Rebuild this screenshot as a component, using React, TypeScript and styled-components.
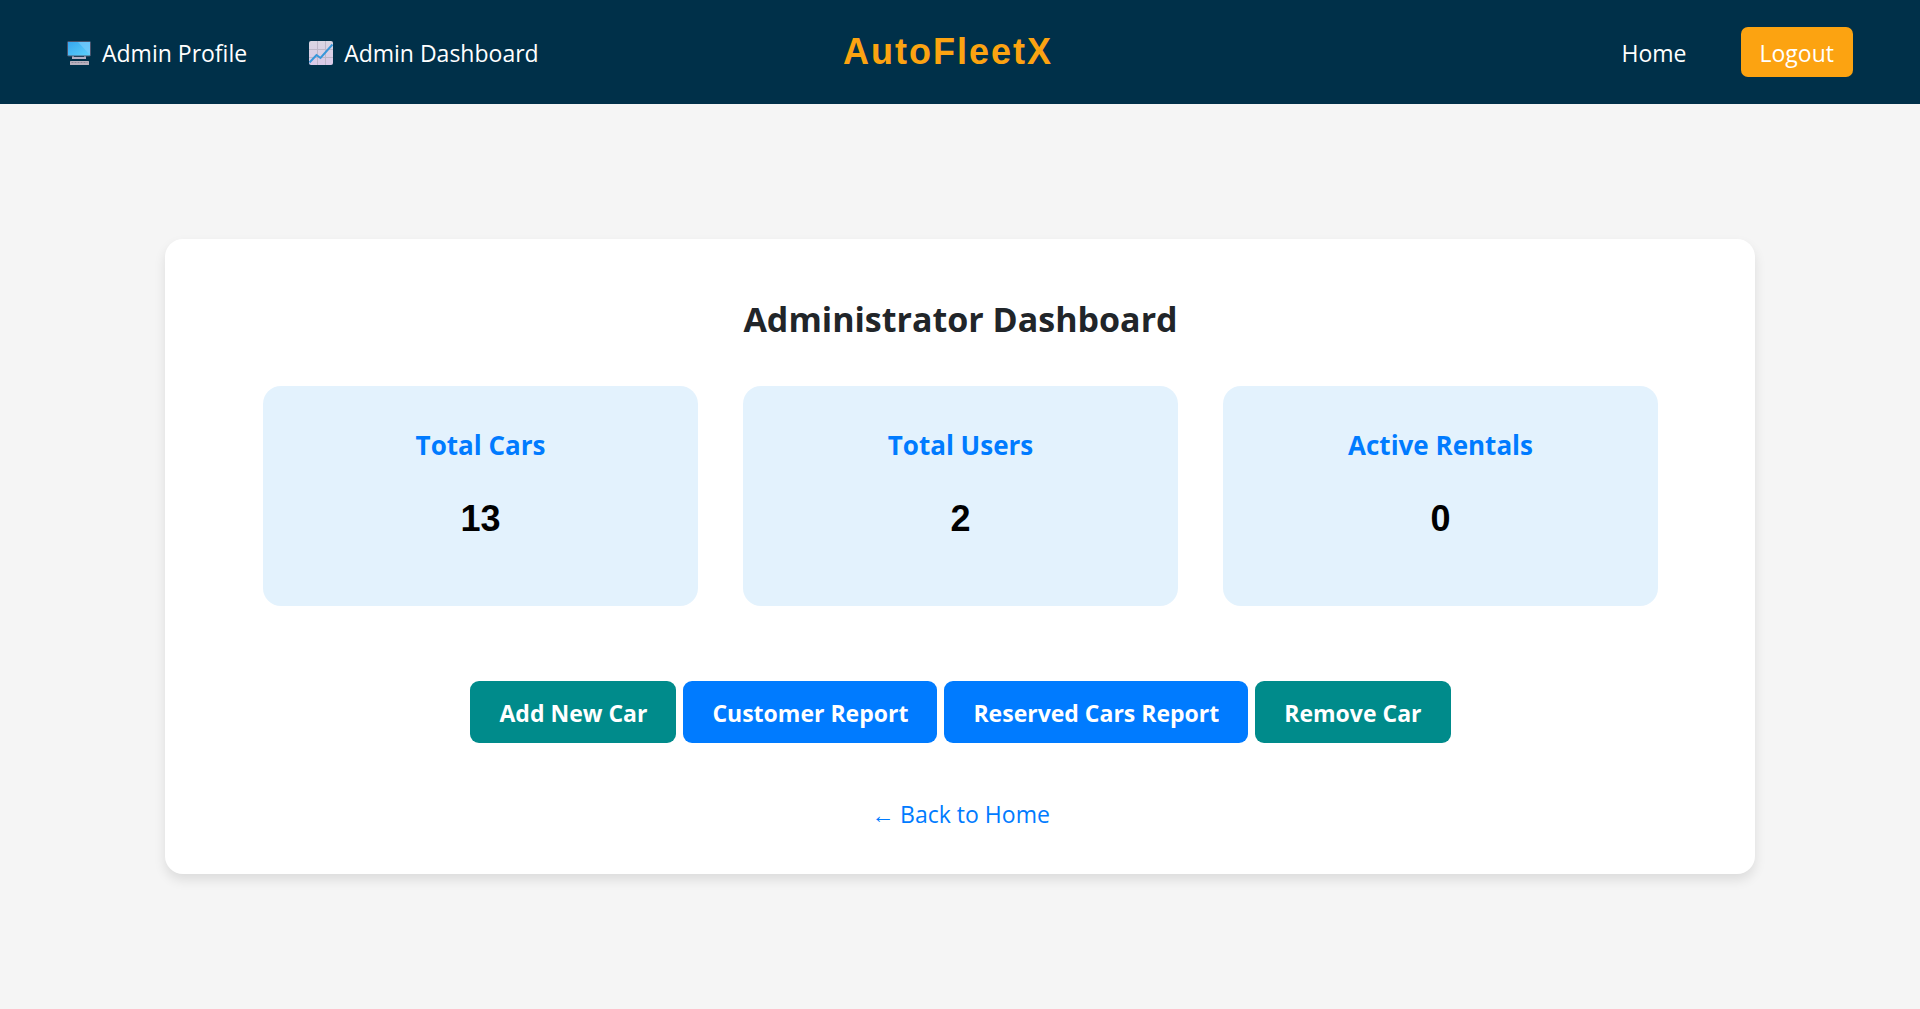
import React from "react";
import styled, { createGlobalStyle } from "styled-components";

const GlobalStyle = createGlobalStyle`
  *, *::before, *::after { box-sizing: border-box; }
  body {
    margin: 0;
    background: #f5f5f5;
    color: #212529;
    font-family: "Segoe UI", "Open Sans", "Noto Sans", sans-serif;
    font-size: 23px;
    line-height: 36px;
  }
  h1, h2, p { margin: 0; }
`;

const Page = styled.div`
  min-height: 100vh;
  display: flex;
  flex-direction: column;
`;

const Header = styled.header`
  display: grid;
  grid-template-columns: 1fr auto 1fr;
  align-items: center;
  min-height: 104px;
  padding: 0 67px;
  background: #003049;
`;

const Nav = styled.nav<{ $end?: boolean }>`
  display: flex;
  align-items: center;
  justify-content: ${(p) => (p.$end ? "flex-end" : "flex-start")};
  gap: ${(p) => (p.$end ? 54 : 62)}px;
`;

const NavLink = styled.a`
  display: inline-flex;
  align-items: center;
  gap: 11px;
  padding-top: 2px;
  color: #fff;
  text-decoration: none;
  white-space: nowrap;
`;

const Icon = styled.svg`
  width: 24px;
  height: 24px;
  flex: none;
`;

const Brand = styled.div`
  padding-right: 24px;
  color: #fca311;
  font-family: Arial, "Liberation Sans", sans-serif;
  font-size: 36px;
  font-weight: 700;
  letter-spacing: 2px;
`;

const Logout = styled.button`
  padding: 8px 19px 6px;
  border: 0;
  border-radius: 7px;
  background: #fca311;
  color: #fff;
  font: inherit;
  cursor: pointer;
`;

const Main = styled.main`
  flex: 1;
  display: flex;
  align-items: center;
  justify-content: center;
  padding: 24px 165px;
`;

const Panel = styled.section`
  display: flex;
  flex-direction: column;
  align-items: center;
  width: 100%;
  padding: 59px 97px 42px 98px;
  border-radius: 18px;
  background: #fff;
  box-shadow: 0 6px 12px rgba(0, 0, 0, 0.1);
`;

const Title = styled.h1`
  font-size: 34px;
  font-weight: 700;
  line-height: 43px;
`;

const Stats = styled.div`
  display: grid;
  grid-template-columns: repeat(3, 1fr);
  gap: 45px;
  width: 100%;
  margin-top: 45px;
`;

const Stat = styled.article`
  min-height: 220px;
  padding: 41px 24px;
  border-radius: 18px;
  background: #e3f2fd;
  text-align: center;
`;

const StatName = styled.h2`
  color: #007bff;
  font-size: 26px;
  font-weight: 700;
`;

const StatValue = styled.p`
  margin-top: 38px;
  color: #000;
  font-family: Arial, "Liberation Sans", sans-serif;
  font-size: 36px;
  font-weight: 700;
`;

const Actions = styled.div`
  display: flex;
  flex-wrap: wrap;
  justify-content: center;
  gap: 7px;
  margin-top: 75px;
`;

const Action = styled.button<{ $report?: boolean }>`
  padding: 14px 29px 12px;
  border: 0;
  border-radius: 9px;
  background: ${(p) => (p.$report ? "#007bff" : "#008b8b")};
  color: #fff;
  font: inherit;
  font-weight: 700;
  cursor: pointer;
`;

const BackLink = styled.a`
  margin-top: 53px;
  color: #007bff;
  text-decoration: none;
`;

const ComputerIcon = () => (
  <Icon viewBox="0 0 24 24" aria-hidden="true">
    <defs>
      <linearGradient id="screen" x1="0" y1="0" x2="1" y2="1">
        <stop offset="0" stopColor="#35a5ef" />
        <stop offset="1" stopColor="#5ed2fb" />
      </linearGradient>
    </defs>
    <path d="M5 14v4h14v-4h-2v2H7v-2z" fill="#b5b0c4" />
    <rect x="0.5" y="0.5" width="23" height="14.5" rx="1" fill="url(#screen)" stroke="#4b526b" />
    <path d="M1 1h10l12 13V1z" fill="#7bc9fa" opacity="0.65" />
    <rect x="3" y="20" width="19" height="4" rx="0.5" fill="#b9b1bd" />
    <path d="M4.500 21.500h16" stroke="#8f899b" strokeWidth="1" strokeDasharray="2 1" />
  </Icon>
);

const ChartIcon = () => (
  <Icon viewBox="0 0 24 24" aria-hidden="true">
    <defs>
      <linearGradient id="paper" x1="0" y1="0" x2="0" y2="1">
        <stop offset="0" stopColor="#d9d5e2" />
        <stop offset="1" stopColor="#dac9e8" />
      </linearGradient>
    </defs>
    <rect width="24" height="24" rx="2" fill="url(#paper)" />
    <path d="M8.500 0v24M16.500 0v24M0 8.500h24M0 16.500h24" stroke="#bdb7c8" />
    <path d="M0.500 21.500 7.500 14l4 3L23.500 3.500" fill="none" stroke="#3797da" strokeWidth="2" />
  </Icon>
);

const stats = [
  { name: "Total Cars", value: 13 },
  { name: "Total Users", value: 2 },
  { name: "Active Rentals", value: 0 },
];

const actions = [
  { label: "Add New Car", report: false },
  { label: "Customer Report", report: true },
  { label: "Reserved Cars Report", report: true },
  { label: "Remove Car", report: false },
];

export default function App() {
  return (
    <>
      <GlobalStyle />
      <Page>
        <Header>
          <Nav>
            <NavLink href="#profile">
              <ComputerIcon />
              Admin Profile
            </NavLink>
            <NavLink href="#dashboard">
              <ChartIcon />
              Admin Dashboard
            </NavLink>
          </Nav>
          <Brand>AutoFleetX</Brand>
          <Nav $end>
            <NavLink href="#home">Home</NavLink>
            <Logout type="button">Logout</Logout>
          </Nav>
        </Header>
        <Main>
          <Panel>
            <Title>Administrator Dashboard</Title>
            <Stats>
              {stats.map((s) => (
                <Stat key={s.name}>
                  <StatName>{s.name}</StatName>
                  <StatValue>{s.value}</StatValue>
                </Stat>
              ))}
            </Stats>
            <Actions>
              {actions.map((a) => (
                <Action key={a.label} type="button" $report={a.report}>
                  {a.label}
                </Action>
              ))}
            </Actions>
            <BackLink href="#home">← Back to Home</BackLink>
          </Panel>
        </Main>
      </Page>
    </>
  );
}
